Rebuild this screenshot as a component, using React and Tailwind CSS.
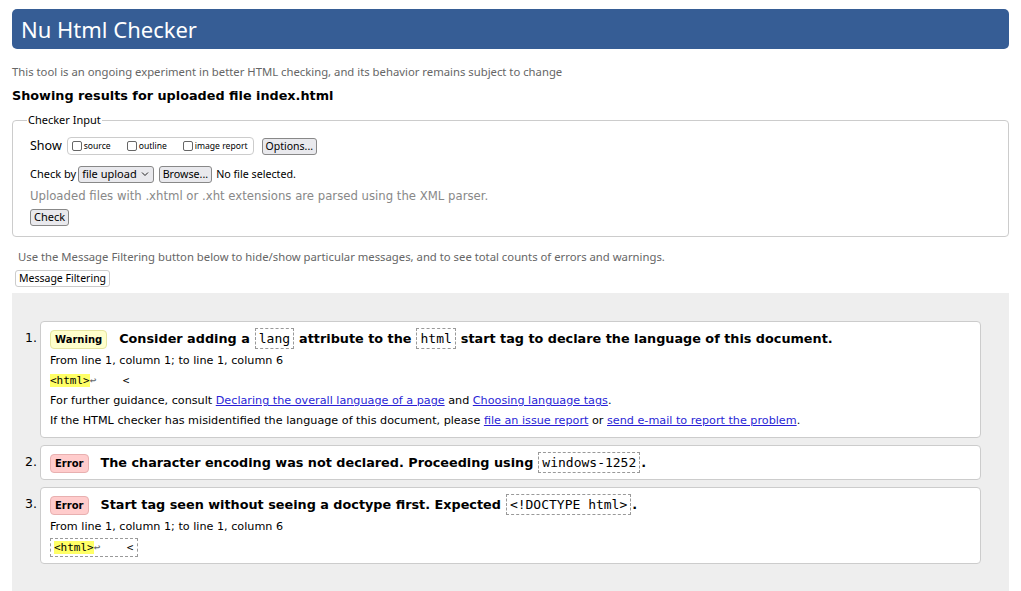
import React from 'react';

const ui = { fontFamily: '"Noto Sans", "Open Sans", sans-serif' };
const dv = { fontFamily: '"DejaVu Sans", sans-serif' };
const mono = { fontFamily: '"DejaVu Sans Mono", monospace' };

const Code = ({ children, tight }) => (
  <code
    style={mono}
    className={
      'ml-[5px] inline-block border border-dashed border-[#999] px-[3px] text-[13px] font-normal leading-[19px] text-black ' +
      (tight ? 'mr-[1px]' : 'mr-[5px]')
    }
  >
    {children}
  </code>
);

const Badge = ({ kind }) => (
  <span
    className={
      'mr-[12px] inline-block rounded-[4px] border px-[4px] text-[10px] font-bold leading-[17px] ' +
      (kind === 'Warning' ? 'border-[#e5e5a0] bg-[#ffffcc]' : 'border-[#e8b0b0] bg-[#ffcccc]')
    }
  >
    {kind}
  </span>
);

const Extract = ({ boxed }) => (
  <div className="flex h-[20px] items-center text-[11px]">
    <code
      style={mono}
      className={'inline-block ' + (boxed ? 'border border-dashed border-[#999] px-[3px] leading-[17px]' : 'leading-[20px]')}
    >
      <span className="bg-[#ffff66]">&lt;html&gt;</span>
      <span className="text-[#666]">↩</span>
      <span className="whitespace-pre">    &lt;</span>
    </code>
  </div>
);

const Link = ({ children }) => <a className="text-[#2a1fd6] underline" href="#">{children}</a>;

const Message = ({ n, kind, title, children }) => (
  <li className="flex items-start">
    <span className="w-[28px] shrink-0 pt-[7px] pl-[13px] text-[12.5px] leading-[20px]">{n}.</span>
    <div
      className={
        'flex-1 rounded-[4px] border border-[#ccc] bg-white pl-[9px] pr-[8px] pt-[6px] ' + (children ? 'pb-[6px]' : 'pb-[7px]')
      }
    >
      <div className="flex h-[20px] items-center text-[12.8px] font-bold">
        <p className="whitespace-nowrap leading-[20px]">
          <Badge kind={kind} />
          {title}
        </p>
      </div>
      {children && <div className="mt-[3px]">{children}</div>}
    </div>
  </li>
);

const Row = ({ children }) => <p className="text-[11.2px] leading-[20px]">{children}</p>;

const Box = () => <span className="inline-block h-[10px] w-[10px] rounded-[2px] border border-[#666]" />;

export default function App() {
  return (
    <div className="min-h-[591px] bg-white px-[12px] pt-[9px] text-black" style={ui}>
      <header className="flex h-[40px] items-center rounded-[5px] bg-[#365d95] pl-[9px]">
        <h1 className="text-[22px] leading-none text-white">Nu Html Checker</h1>
      </header>

      <p className="mt-[16px] text-[11.3px] leading-[14px] text-[#666]">
        This tool is an ongoing experiment in better HTML checking, and its behavior remains subject to change
      </p>
      <h2 style={dv} className="mt-[9px] text-[12.8px] font-bold leading-[16px]">
        Showing results for uploaded file index.html
      </h2>

      <fieldset className="mt-[9px] rounded-[4px] border border-[#ccc] px-[17px] pb-[9px] pt-[10px]">
        <legend className="-ml-[3px] px-[1px] text-[11px] leading-[14px]">Checker Input</legend>
        <div className="flex items-center text-[12.5px]">
          <span>Show</span>
          <div className="ml-[5px] flex h-[18px] items-center rounded-[4px] border border-[#ccc] pl-[4px] pr-[5px] text-[8.6px]">
            <label className="flex w-[55px] items-center gap-[2px]">
              <Box />source
            </label>
            <label className="flex w-[56px] items-center gap-[2px]">
              <Box />outline
            </label>
            <label className="flex items-center gap-[2px]">
              <Box />image report
            </label>
          </div>
          <button className="ml-[8px] h-[17px] rounded-[3px] border border-[#888] bg-[#e9e9ed] px-[3px] text-[10.5px] leading-[14px]">
            Options...
          </button>
        </div>
        <div className="mt-[10px] flex items-center text-[11px]">
          <span>Check by</span>
          <span className="ml-[2px] flex h-[17px] items-center gap-[4px] rounded-[3px] border border-[#888] bg-[#e9e9ed] pl-[3px] pr-[4px]">
            file upload
            <svg width="8" height="6" viewBox="0 0 8 6"><path d="M1 1.5 4 4.5 7 1.5" fill="none" stroke="#222" strokeWidth="1" /></svg>
          </span>
          <button className="ml-[5px] h-[17px] rounded-[3px] border border-[#888] bg-[#e9e9ed] px-[3px] text-[10.7px] leading-[14px]">
            Browse...
          </button>
          <span className="ml-[4px] text-[10.7px]">No file selected.</span>
        </div>
        <p style={dv} className="mt-[7px] text-[11.7px] leading-[12px] text-[#888]">
          Uploaded files with .xhtml or .xht extensions are parsed using the XML parser.
        </p>
        <button className="mt-[7px] h-[17px] rounded-[3px] border border-[#888] bg-[#e9e9ed] px-[3px] text-[11px] leading-[14px]">
          Check
        </button>
      </fieldset>

      <p className="mt-[13px] pl-[6px] text-[11.3px] leading-[14px] text-[#666]">
        Use the Message Filtering button below to hide/show particular messages, and to see total counts of errors and warnings.
      </p>
      <button className="ml-[3px] mt-[5px] h-[17px] rounded-[3px] border border-[#ccc] bg-white px-[3px] text-[10.5px] leading-[14px]">
        Message Filtering
      </button>

      <div style={dv} className="mt-[5px] h-[298px] bg-[#eeeeee] pr-[28px] pt-[28px]">
        <ol className="flex flex-col gap-[7px]">
          <Message
            n={1}
            kind="Warning"
            title={
              <>
                Consider adding a<Code>lang</Code>attribute to the<Code>html</Code>start tag to declare the language of this document.
              </>
            }
          >
            <Row>From line 1, column 1; to line 1, column 6</Row>
            <Extract />
            <Row>
              For further guidance, consult <Link>Declaring the overall language of a page</Link> and{' '}
              <Link>Choosing language tags</Link>.
            </Row>
            <Row>
              If the HTML checker has misidentified the language of this document, please <Link>file an issue report</Link> or{' '}
              <Link>send e-mail to report the problem</Link>.
            </Row>
          </Message>
          <Message
            n={2}
            kind="Error"
            title={
              <>
                The character encoding was not declared. Proceeding using<Code tight>windows-1252</Code>.
              </>
            }
          />
          <Message
            n={3}
            kind="Error"
            title={
              <>
                Start tag seen without seeing a doctype first. Expected<Code tight>&lt;!DOCTYPE html&gt;</Code>.
              </>
            }
          >
            <Row>From line 1, column 1; to line 1, column 6</Row>
            <Extract boxed />
          </Message>
        </ol>
      </div>
    </div>
  );
}
